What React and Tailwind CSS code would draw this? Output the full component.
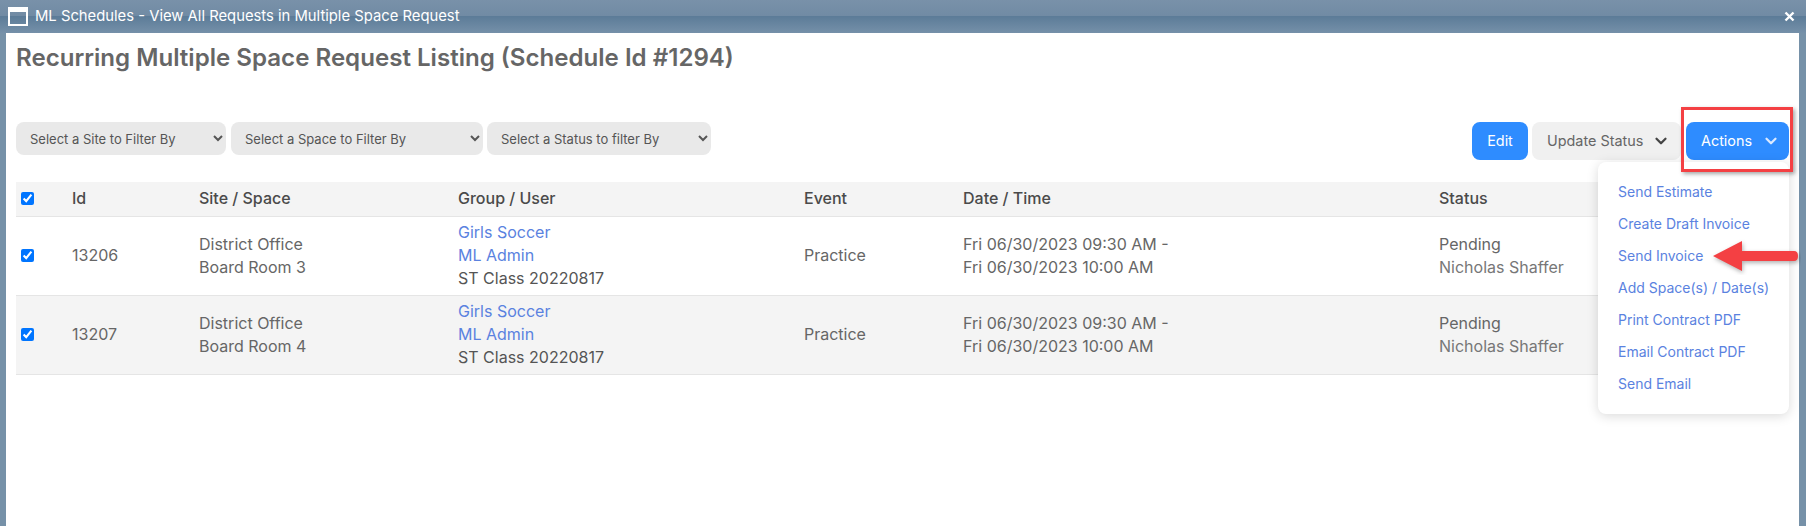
import React from "react";
import { ChevronDown } from "lucide-react";

const columns = [51, 127, 259, 346, 159, 476, 355];

const menuItems = [
  "Send Estimate",
  "Create Draft Invoice",
  "Send Invoice",
  "Add Space(s) / Date(s)",
  "Print Contract PDF",
  "Email Contract PDF",
  "Send Email",
];

const rows = [
  { id: "13206", room: "Board Room 3", shaded: false },
  { id: "13207", room: "Board Room 4", shaded: true },
];

const TitleBar = () => (
  <div className="h-[33px] shrink-0 flex items-center justify-between pl-2 pr-[11px] bg-[linear-gradient(to_bottom,#7991a9_0%,#718ba4_48%,#5c7c98_50%,#7590a9_100%)]">
    <div className="flex items-center gap-[7px]">
      <div className="w-5 h-[19px] border-2 border-t-[5px] border-white" />
      <span className="text-white text-[14.8px]">
        ML Schedules - View All Requests in Multiple Space Request
      </span>
    </div>
    <svg width="11" height="11" viewBox="0 0 11 11" className="mb-[1px]">
      <path d="M1.5 1.5L9.5 9.5M9.5 1.5L1.5 9.5" stroke="#fff" strokeWidth="2.4" />
    </svg>
  </div>
);

const FilterSelect = ({ width, label }) => (
  <select
    className="h-[33px] pl-[10px] pr-1 rounded-lg bg-[#e9e9e9] text-[13px] text-[#555]"
    style={{ width }}
    defaultValue={label}
  >
    <option>{label}</option>
  </select>
);

const Toolbar = () => (
  <div className="flex items-start justify-between mt-[50px] pl-[10px] pr-[10px]">
    <div className="flex items-center">
      <FilterSelect width={210} label="Select a Site to Filter By" />
      <div className="w-[5px]" />
      <FilterSelect width={252} label="Select a Space to Filter By" />
      <div className="w-1" />
      <FilterSelect width={224} label="Select a Status to filter By" />
    </div>
    <div className="flex items-center gap-[4px] text-[14.4px]">
      <button className="w-14 h-[38px] rounded-lg bg-[#2e8cff] text-white">Edit</button>
      <button className="w-[149px] h-[38px] pl-[15px] rounded-lg bg-[#f0f0f0] text-[#666] flex items-center gap-[9px]">
        Update Status
        <ChevronDown size={18} strokeWidth={3} className="text-[#444]" />
      </button>
      <button className="w-[103px] h-[38px] pl-[15px] rounded-lg bg-[#2e8cff] text-white flex items-center gap-[10px] ml-[1px]">
        Actions
        <ChevronDown size={18} strokeWidth={3} className="text-[#dbe9ff]" />
      </button>
    </div>
  </div>
);

const Checkbox = () => (
  <input type="checkbox" defaultChecked readOnly className="block w-[13px] h-[13px] ml-[5px] accent-[#0075ff]" />
);

const RequestTable = () => (
  <div className="mt-[22px] pl-[10px] pr-[10px]">
    <table className="w-full table-fixed border-collapse text-[16px] text-[#666]">
      <colgroup>
        {columns.map((w, i) => (
          <col key={i} style={{ width: w }} />
        ))}
      </colgroup>
      <thead>
        <tr className="h-[34px] bg-[#f4f4f4] border-b border-[#e5e5e5] text-left text-[#4a4a4a]">
          <th className="pb-[1px]"><Checkbox /></th>
          <th className="px-[5px] pb-[1px] font-medium">Id</th>
          <th className="px-[5px] pb-[1px] font-medium">Site / Space</th>
          <th className="px-[5px] pb-[1px] font-medium">Group / User</th>
          <th className="px-[5px] pb-[1px] font-medium">Event</th>
          <th className="px-[5px] pb-[1px] font-medium">Date / Time</th>
          <th className="px-[5px] pb-[1px] font-medium">Status</th>
        </tr>
      </thead>
      <tbody>
        {rows.map((row) => (
          <tr
            key={row.id}
            className={`h-[79px] border-b border-[#e5e5e5] leading-[23px] ${row.shaded ? "bg-[#f4f4f4]" : "bg-white"}`}
          >
            <td><Checkbox /></td>
            <td className="px-[5px]">{row.id}</td>
            <td className="px-[5px]">
              <div>District Office</div>
              <div>{row.room}</div>
            </td>
            <td className="px-[5px]">
              <div className="text-[#5a82e0]">Girls Soccer</div>
              <div className="text-[#5a82e0]">ML Admin</div>
              <div className="text-[#555]">ST Class 20220817</div>
            </td>
            <td className="px-[5px]">Practice</td>
            <td className="px-[5px]">
              <div>Fri 06/30/2023 09:30 AM -</div>
              <div>Fri 06/30/2023 10:00 AM</div>
            </td>
            <td className="px-[5px]">
              <div>Pending</div>
              <div className="text-[#777]">Nicholas Shaffer</div>
            </td>
          </tr>
        ))}
      </tbody>
    </table>
  </div>
);

const ActionsMenu = () => (
  <div className="absolute left-[1592px] top-[129px] w-[191px] h-[252px] py-[13px] rounded-lg bg-white shadow-[0_2px_12px_rgba(0,0,0,0.15)]">
    {menuItems.map((item) => (
      <div key={item} className="h-8 pl-5 flex items-center text-[14px] text-[#5a82e0]">
        {item}
      </div>
    ))}
  </div>
);

const Annotations = () => (
  <>
    <div className="absolute left-[1675px] top-[74px] w-[112px] h-[65px] border-[3px] border-[#f44043] shadow-[2px_2px_4px_rgba(0,0,0,0.35)]" />
    <svg className="absolute left-[1705px] top-[206px]" width="90" height="36" viewBox="0 0 90 36">
      <path
        d="M2 17L31 2V12H83Q87 12 87 17Q87 22 83 22H31V32Z"
        fill="#f44043"
        style={{ filter: "drop-shadow(1px 2px 2px rgba(0,0,0,0.3))" }}
      />
    </svg>
  </>
);

export default function App() {
  return (
    <div className="h-screen flex flex-col bg-[#7691a8] font-['Inter',sans-serif] overflow-hidden">
      <TitleBar />
      <div className="relative flex-1 ml-[6px] mr-[7px] bg-white">
        <h1 className="pl-[10px] pt-[11px] text-[24.1px] leading-[28px] font-semibold text-[#666]">
          Recurring Multiple Space Request Listing (Schedule Id #1294)
        </h1>
        <Toolbar />
        <RequestTable />
        <ActionsMenu />
        <Annotations />
      </div>
    </div>
  );
}
